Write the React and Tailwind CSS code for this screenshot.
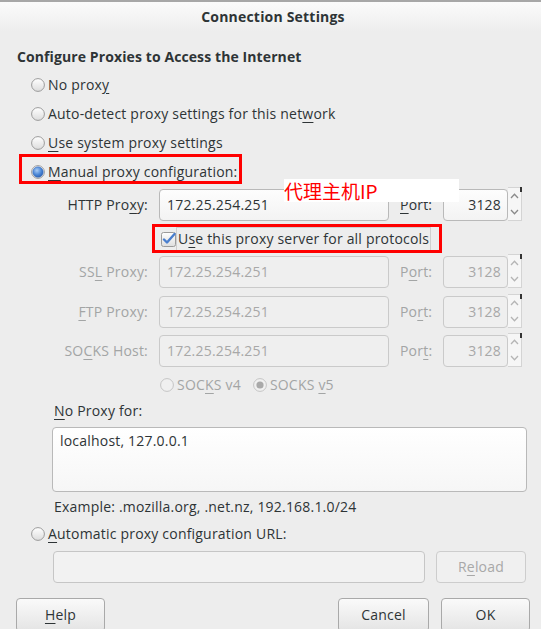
import React from "react";

const U = ({ children }) => (
  <span className="underline decoration-1 underline-offset-[3px]">{children}</span>
);

function Radio({ checked = false, disabled = false }) {
  return (
    <svg width="14" height="14" viewBox="0 0 14 14" className="shrink-0">
      <defs>
        <linearGradient id="rg" x1="0" y1="0" x2="0" y2="1">
          <stop offset="0" stopColor="#ffffff" />
          <stop offset="1" stopColor="#dcdcdc" />
        </linearGradient>
        <radialGradient id="rb" cx="0.4" cy="0.35" r="0.7">
          <stop offset="0" stopColor="#a9ccf5" />
          <stop offset="0.6" stopColor="#4a86d6" />
          <stop offset="1" stopColor="#2c5fae" />
        </radialGradient>
      </defs>
      <circle
        cx="7"
        cy="7"
        r="6.4"
        fill={disabled ? "#f0f0f0" : "url(#rg)"}
        stroke={disabled ? "#c4c4c4" : "#9b9b9b"}
        strokeWidth="1"
      />
      {checked && !disabled && (
        <circle cx="7" cy="7" r="5.2" fill="url(#rb)" stroke="#3a6fbf" strokeWidth="0.6" />
      )}
      {checked && disabled && <circle cx="7" cy="7" r="3.6" fill="#a9a9a9" />}
    </svg>
  );
}

function Spinner({ disabled }) {
  const c = disabled ? "#b5b5b5" : "#8a8a8a";
  return (
    <div className="relative w-[14px] h-[34px] -mt-[2px] bg-[#f6f6f6] border border-l-0 border-[#d4d4d4] flex flex-col items-center justify-between py-[5px]">
      <div className="absolute -right-[1px] -top-[1px] w-[2px] h-[5px] bg-[#333]" />
      <svg width="9" height="6" viewBox="0 0 9 6" className="shrink-0">
        <path d="M1 5 L4.5 1.3 L8 5" fill="none" stroke={c} strokeWidth="1.3" />
      </svg>
      <svg width="9" height="6" viewBox="0 0 9 6" className="shrink-0">
        <path d="M1 1 L4.5 4.7 L8 1" fill="none" stroke={c} strokeWidth="1.3" />
      </svg>
    </div>
  );
}

function ProxyRow({ label, port, disabled, className = "" }) {
  return (
    <div className={"flex items-center h-[32px] " + className}>
      <div
        className={
          "w-[148px] pr-0 text-right " + (disabled ? "text-[#a3a5a5]" : "text-[#2e3436]")
        }
      >
        {label}
      </div>
      <div
        className={
          "ml-[11px] w-[230px] h-[32px] rounded-[4px] border flex items-center pl-[7px] " +
          (disabled
            ? "border-[#cacaca] bg-[#efefef] text-[#a8a8a8]"
            : "border-[#b9b9b9] bg-gradient-to-b from-[#fdfdfd] to-[#f3f3f3] text-[#2e3436]")
        }
      >
        172.25.254.251
      </div>
      <div className={"ml-[11px] w-[43px] " + (disabled ? "text-[#a3a5a5]" : "text-[#2e3436]")}>
        {port}
      </div>
      <div
        className={
          "w-[65px] h-[32px] rounded-[4px] border flex items-center justify-end pr-[6px] " +
          (disabled
            ? "border-[#cacaca] bg-[#efefef] text-[#a8a8a8]"
            : "border-[#b9b9b9] bg-gradient-to-b from-[#fdfdfd] to-[#f3f3f3] text-[#2e3436]")
        }
      >
        3128
      </div>
      <Spinner disabled={disabled} />
    </div>
  );
}

function Button({ children, className = "", disabled }) {
  return (
    <div
      className={
        "h-[32px] rounded-[4px] border flex items-center justify-center " +
        (disabled
          ? "border-[#cdcdcd] bg-[#f0f0f0] text-[#a8a8a8] "
          : "border-[#a9a9a9] bg-gradient-to-b from-[#fafafa] to-[#e4e4e4] text-[#2e3436] ") +
        className
      }
    >
      {children}
    </div>
  );
}

export default function App() {
  return (
    <div className="relative w-[541px] h-[629px] overflow-hidden bg-[#ededed] text-[#2e3436] text-[14px] leading-[20px] font-['Open_Sans','Noto_Sans',sans-serif] tracking-[0.2px]">
      <div className="h-[2px] bg-[#a7a7a7]" />
      <div className="h-[30px] bg-gradient-to-b from-[#fbfbfb] to-[#ededed] flex items-center justify-center font-bold text-[14px] pl-[5px] tracking-[0.2px]">
        Connection Settings
      </div>

      <div className="mt-[15px] pl-[17px] font-bold text-[14px] tracking-[0.1px]">
        Configure Proxies to Access the Internet
      </div>

      <div className="mt-[3px] pl-[31px]">
        <div className="h-[29px] flex items-center gap-[3px]">
          <Radio />
          <span>
            No prox<U>y</U>
          </span>
        </div>
        <div className="h-[29px] flex items-center gap-[3px]">
          <Radio />
          <span>
            Auto-detect proxy settings for this net<U>w</U>ork
          </span>
        </div>
        <div className="h-[29px] flex items-center gap-[3px]">
          <Radio />
          <span>
            <U>U</U>se system proxy settings
          </span>
        </div>
        <div className="h-[29px] flex items-center gap-[3px]">
          <Radio checked />
          <span>
            <U>M</U>anual proxy configuration:
          </span>
        </div>
      </div>

      <ProxyRow
        className="mt-[3px]"
        label={
          <>
            HTTP Pro<U>x</U>y:
          </>
        }
        port={
          <>
            <U>P</U>ort:
          </>
        }
      />

      <div className="mt-[4px] h-[28px] flex items-center pl-[161px]">
        <svg width="15" height="15" viewBox="0 0 15 15" className="shrink-0">
          <defs>
            <linearGradient id="cb" x1="0" y1="0" x2="0" y2="1">
              <stop offset="0" stopColor="#ffffff" />
              <stop offset="1" stopColor="#dedede" />
            </linearGradient>
          </defs>
          <rect x="0.5" y="0.5" width="14" height="14" rx="2" fill="url(#cb)" stroke="#9b9b9b" />
          <path d="M3 7.5 L6 10.5 L13.5 2" fill="none" stroke="#4a7fce" strokeWidth="2.4" strokeLinecap="round" strokeLinejoin="round" />
        </svg>
        <div className="h-[24px] flex items-center border border-[#cfcfcf] pl-[1px] pr-[1px]">
          U<U>s</U>e this proxy server for all protocols
        </div>
      </div>

      <ProxyRow
        disabled
        className="mt-[3px]"
        label={
          <>
            SS<U>L</U> Proxy:
          </>
        }
        port={
          <>
            P<U>o</U>rt:
          </>
        }
      />
      <ProxyRow
        disabled
        className="mt-[8px]"
        label={
          <>
            <U>F</U>TP Proxy:
          </>
        }
        port={
          <>
            Po<U>r</U>t:
          </>
        }
      />
      <ProxyRow
        disabled
        className="mt-[7px]"
        label={
          <>
            SO<U>C</U>KS Host:
          </>
        }
        port={
          <>
            Por<U>t</U>:
          </>
        }
      />

      <div className="mt-[8px] h-[20px] flex items-center pl-[160px] text-[#a3a5a5]">
        <div className="flex items-center gap-[3px]">
          <Radio disabled />
          <span>
            SOC<U>K</U>S v4
          </span>
        </div>
        <div className="flex items-center gap-[3px] ml-[12px]">
          <Radio disabled checked />
          <span>
            SOCKS <U>v</U>5
          </span>
        </div>
      </div>

      <div className="mt-[6px] pl-[54px] h-[20px]">
        <U>N</U>o Proxy for:
      </div>

      <div className="mt-[6px] ml-[52px] w-[475px] h-[65px] rounded-[4px] border border-[#b9b9b9] bg-gradient-to-b from-[#ffffff] to-[#f6f6f6] pl-[7px] pt-[3px]">
        localhost, 127.0.0.1
      </div>

      <div className="mt-[5px] pl-[54px] h-[20px]">
        Example: .mozilla.org, .net.nz, 192.168.1.0/24
      </div>

      <div className="mt-[7px] pl-[31px] h-[20px] flex items-center gap-[3px]">
        <Radio />
        <span>
          <U>A</U>utomatic proxy configuration URL:
        </span>
      </div>

      <div className="mt-[7px] pl-[53px] flex items-center">
        <div className="w-[372px] h-[32px] rounded-[4px] border border-[#c6c6c6] bg-[#f2f2f2]" />
        <Button disabled className="ml-[11px] w-[90px] h-[31px]">
          R<U>e</U>load
        </Button>
      </div>

      <div className="mt-[15px] pl-[16px] flex items-start">
        <Button className="w-[89px] h-[34px]">
          <span>
            <U>H</U>elp
          </span>
        </Button>
        <Button className="ml-[233px] w-[91px] h-[34px]">Cancel</Button>
        <Button className="ml-[12px] w-[89px] h-[34px]">OK</Button>
      </div>

      {/* annotations */}
      <div className="absolute left-[19px] top-[154px] w-[223px] h-[30px] border-[3px] border-[#ff0000]" />
      <div className="absolute left-[152px] top-[224px] w-[290px] h-[29px] border-[3px] border-[#ff0000]" />
      <div className="absolute left-[284px] top-[179px] w-[175px] h-[23px] bg-white flex items-center text-[#ff0000] text-[19px] leading-[22px] tracking-normal font-['Noto_Sans_CJK_SC',sans-serif]">
        代理主机IP
      </div>
    </div>
  );
}
